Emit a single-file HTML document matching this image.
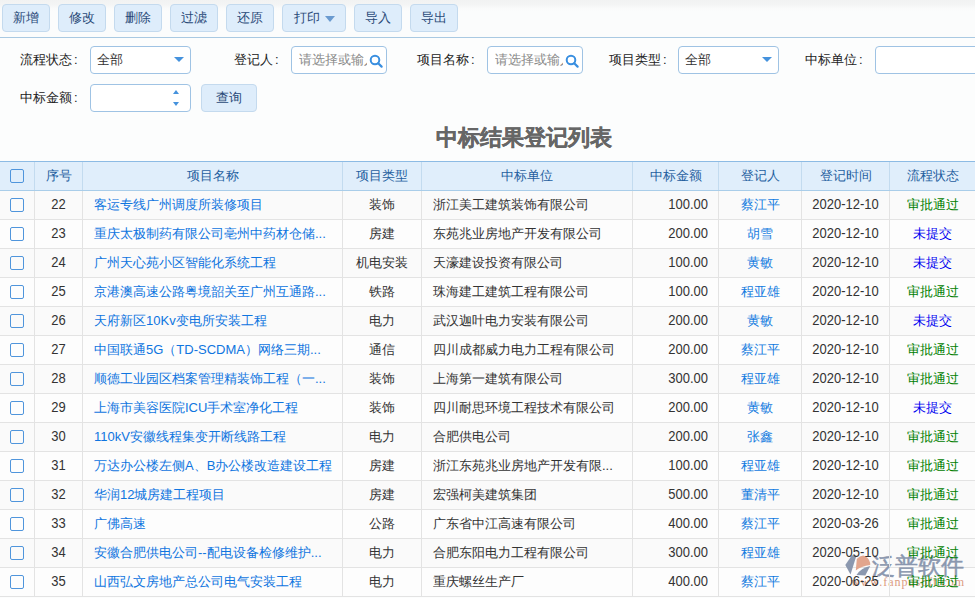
<!DOCTYPE html>
<html><head><meta charset="utf-8"><style>
*{box-sizing:border-box;margin:0;padding:0}
html,body{width:975px;height:598px;overflow:hidden}
body{background:#fcfdfd;font-family:"Liberation Sans",sans-serif;font-size:13px;color:#222;position:relative}
.toolbar{position:absolute;left:0;top:0;width:975px;height:38px;background:linear-gradient(#f1f2f2 0px,#f3f4f4 4px,#f9fafa 8px,#fbfcfc 12px,#fbfcfc 38px);border-bottom:1px solid #a9c9e2}
.btn{position:absolute;top:4px;height:28px;width:48px;border:1px solid #c4daee;border-radius:4px;background:#deedfb;color:#2a4a78;text-align:center;line-height:26px;font-size:13px}
.btn .arr{display:inline-block;width:0;height:0;border-left:5px solid transparent;border-right:5px solid transparent;border-top:6px solid #6a9bd0;margin-left:5px;vertical-align:0px}
.lbl{position:absolute;font-size:13px;color:#222;line-height:28px}
.inp{position:absolute;height:28px;border:1px solid #9fc3e4;border-radius:4px;background:#fff;line-height:26px;padding-left:6px;font-size:13px;color:#333;overflow:hidden;white-space:nowrap}
.inp .ph{color:#8a8a8a}
.sel-arr{position:absolute;right:6px;top:10px;width:0;height:0;border-left:5px solid transparent;border-right:5px solid transparent;border-top:5px solid #4592dd}
.title{position:absolute;left:0;width:1047px;top:123px;text-align:center;font-size:22px;font-weight:bold;color:#666;line-height:30px;-webkit-text-stroke:.3px #666}
.thead{position:absolute;left:0;top:161px;width:975px;height:30px;background:#e0eefb;border-top:1px solid #8dbbe4;border-bottom:1px solid #a9cde9}
.th{position:absolute;top:0;height:28px;line-height:28px;text-align:center;color:#1f5f9f;border-left:1px solid #c3dbef}
.th:first-child{border-left:none}
.tr{position:absolute;left:0;width:975px;height:29px;background:#fdfdfd;border-bottom:1px solid #e3e3e3}
.tr.alt{background:#fafafa}
.td{position:absolute;z-index:2;top:0;color:#333;height:28px;line-height:28px;border-left:1px solid #e3e3e3;white-space:nowrap;overflow:hidden}
.td:first-child{border-left:none}
.td.c{text-align:center}
.td.l{padding-left:11px}
.td.r{text-align:right;padding-right:10px}
.name{color:#0f75e0}
.who{color:#127ae0}
.ok{color:#008000}
.no{color:#0000f0}
.cb{display:inline-block;width:14px;height:14px;border:1px solid #4f95dc;border-radius:2px;background:transparent;vertical-align:middle}
.th .cb{position:absolute;left:10px;top:7px}.td .cb{position:absolute;left:10px;top:7px}

.colon{margin-left:2px}
.srch{position:absolute;left:77px;top:7px}
.inp .ph{position:absolute;left:7px;top:0;width:68px;overflow:hidden}
.spin-up{position:absolute;left:82px;top:5px;width:0;height:0;border-left:3.5px solid transparent;border-right:3.5px solid transparent;border-bottom:4px solid #4592dd}
.spin-dn{position:absolute;left:82px;top:17px;width:0;height:0;border-left:3.5px solid transparent;border-right:3.5px solid transparent;border-top:4px solid #4592dd}
.wm{position:absolute;left:840px;top:550px;width:135px;height:48px;pointer-events:none;z-index:1}
.wm-t{position:absolute;left:32px;top:1px;font-size:23px;line-height:30px;color:#8592ab;opacity:.95;-webkit-text-stroke:.5px #8592ab;white-space:nowrap}
.wm-u{position:absolute;left:11px;top:26px;font-family:"Liberation Serif",serif;font-size:12px;line-height:12px;color:#dc9a80;letter-spacing:1px;white-space:nowrap}
.num{display:inline-block;transform:scaleY(1.11);transform-origin:50% 66%}

</style></head><body>
<div class="toolbar">
<div class="btn" style="left:2px">新增</div>
<div class="btn" style="left:58px">修改</div>
<div class="btn" style="left:114px">删除</div>
<div class="btn" style="left:170px">过滤</div>
<div class="btn" style="left:226px">还原</div>
<div class="btn" style="left:282px;width:64px">打印<span class="arr"></span></div>
<div class="btn" style="left:354px">导入</div>
<div class="btn" style="left:410px">导出</div>
</div>
<div class="lbl" style="left:20px;top:46px">流程状态<span class="colon">:</span></div>
<div class="inp" style="left:90px;top:46px;width:101px">全部<span class="sel-arr"></span></div>
<div class="lbl" style="left:234px;top:46px">登记人<span class="colon">:</span></div>
<div class="inp" style="left:291px;top:46px;width:96px"><span class="ph">请选择或输入</span><svg class="srch" width="14" height="14" viewBox="0 0 14 14"><circle cx="6" cy="6" r="4.3" fill="none" stroke="#3a8fe0" stroke-width="2"/><line x1="9.2" y1="9.2" x2="12.6" y2="12.6" stroke="#3a8fe0" stroke-width="2.2" stroke-linecap="round"/></svg></div>
<div class="lbl" style="left:417px;top:46px">项目名称<span class="colon">:</span></div>
<div class="inp" style="left:487px;top:46px;width:96px"><span class="ph">请选择或输入</span><svg class="srch" width="14" height="14" viewBox="0 0 14 14"><circle cx="6" cy="6" r="4.3" fill="none" stroke="#3a8fe0" stroke-width="2"/><line x1="9.2" y1="9.2" x2="12.6" y2="12.6" stroke="#3a8fe0" stroke-width="2.2" stroke-linecap="round"/></svg></div>
<div class="lbl" style="left:609px;top:46px">项目类型<span class="colon">:</span></div>
<div class="inp" style="left:678px;top:46px;width:101px">全部<span class="sel-arr"></span></div>
<div class="lbl" style="left:805px;top:46px">中标单位<span class="colon">:</span></div>
<div class="inp" style="left:875px;top:46px;width:140px"></div>
<div class="lbl" style="left:20px;top:84px">中标金额<span class="colon">:</span></div>
<div class="inp" style="left:90px;top:84px;width:101px"><span class="spin-up"></span><span class="spin-dn"></span></div>
<div class="btn" style="left:201px;top:84px;width:56px">查询</div>

<div class="title">中标结果登记列表</div>
<div class="table">
<div class="thead"><div class="th" style="left:0px;width:34px"><span class="cb"></span></div><div class="th" style="left:34px;width:48px">序号</div><div class="th" style="left:82px;width:260px">项目名称</div><div class="th" style="left:342px;width:79px">项目类型</div><div class="th" style="left:421px;width:211px">中标单位</div><div class="th" style="left:632px;width:86px">中标金额</div><div class="th" style="left:718px;width:83px">登记人</div><div class="th" style="left:801px;width:88px">登记时间</div><div class="th" style="left:889px;width:86px">流程状态</div></div><div class="tr alt" style="top:191px"><div class="td c" style="left:0px;width:34px"><span class="cb"></span></div><div class="td c" style="left:34px;width:48px"><span class="num">22</span></div><div class="td l name" style="left:82px;width:260px">客运专线广州调度所装修项目</div><div class="td c" style="left:342px;width:79px">装饰</div><div class="td l" style="left:421px;width:211px">浙江美工建筑装饰有限公司</div><div class="td r" style="left:632px;width:86px"><span class="num">100.00</span></div><div class="td c who" style="left:718px;width:83px">蔡江平</div><div class="td c" style="left:801px;width:88px"><span class="num">2020-12-10</span></div><div class="td c ok" style="left:889px;width:86px">审批通过</div></div><div class="tr" style="top:220px"><div class="td c" style="left:0px;width:34px"><span class="cb"></span></div><div class="td c" style="left:34px;width:48px"><span class="num">23</span></div><div class="td l name" style="left:82px;width:260px">重庆太极制药有限公司亳州中药材仓储...</div><div class="td c" style="left:342px;width:79px">房建</div><div class="td l" style="left:421px;width:211px">东苑兆业房地产开发有限公司</div><div class="td r" style="left:632px;width:86px"><span class="num">200.00</span></div><div class="td c who" style="left:718px;width:83px">胡雪</div><div class="td c" style="left:801px;width:88px"><span class="num">2020-12-10</span></div><div class="td c no" style="left:889px;width:86px">未提交</div></div><div class="tr alt" style="top:249px"><div class="td c" style="left:0px;width:34px"><span class="cb"></span></div><div class="td c" style="left:34px;width:48px"><span class="num">24</span></div><div class="td l name" style="left:82px;width:260px">广州天心苑小区智能化系统工程</div><div class="td c" style="left:342px;width:79px">机电安装</div><div class="td l" style="left:421px;width:211px">天濠建设投资有限公司</div><div class="td r" style="left:632px;width:86px"><span class="num">100.00</span></div><div class="td c who" style="left:718px;width:83px">黄敏</div><div class="td c" style="left:801px;width:88px"><span class="num">2020-12-10</span></div><div class="td c no" style="left:889px;width:86px">未提交</div></div><div class="tr" style="top:278px"><div class="td c" style="left:0px;width:34px"><span class="cb"></span></div><div class="td c" style="left:34px;width:48px"><span class="num">25</span></div><div class="td l name" style="left:82px;width:260px">京港澳高速公路粤境韶关至广州互通路...</div><div class="td c" style="left:342px;width:79px">铁路</div><div class="td l" style="left:421px;width:211px">珠海建工建筑工程有限公司</div><div class="td r" style="left:632px;width:86px"><span class="num">100.00</span></div><div class="td c who" style="left:718px;width:83px">程亚雄</div><div class="td c" style="left:801px;width:88px"><span class="num">2020-12-10</span></div><div class="td c ok" style="left:889px;width:86px">审批通过</div></div><div class="tr alt" style="top:307px"><div class="td c" style="left:0px;width:34px"><span class="cb"></span></div><div class="td c" style="left:34px;width:48px"><span class="num">26</span></div><div class="td l name" style="left:82px;width:260px">天府新区10Kv变电所安装工程</div><div class="td c" style="left:342px;width:79px">电力</div><div class="td l" style="left:421px;width:211px">武汉迦叶电力安装有限公司</div><div class="td r" style="left:632px;width:86px"><span class="num">200.00</span></div><div class="td c who" style="left:718px;width:83px">黄敏</div><div class="td c" style="left:801px;width:88px"><span class="num">2020-12-10</span></div><div class="td c no" style="left:889px;width:86px">未提交</div></div><div class="tr" style="top:336px"><div class="td c" style="left:0px;width:34px"><span class="cb"></span></div><div class="td c" style="left:34px;width:48px"><span class="num">27</span></div><div class="td l name" style="left:82px;width:260px">中国联通5G（TD-SCDMA）网络三期...</div><div class="td c" style="left:342px;width:79px">通信</div><div class="td l" style="left:421px;width:211px">四川成都威力电力工程有限公司</div><div class="td r" style="left:632px;width:86px"><span class="num">200.00</span></div><div class="td c who" style="left:718px;width:83px">蔡江平</div><div class="td c" style="left:801px;width:88px"><span class="num">2020-12-10</span></div><div class="td c ok" style="left:889px;width:86px">审批通过</div></div><div class="tr alt" style="top:365px"><div class="td c" style="left:0px;width:34px"><span class="cb"></span></div><div class="td c" style="left:34px;width:48px"><span class="num">28</span></div><div class="td l name" style="left:82px;width:260px">顺德工业园区档案管理精装饰工程（一...</div><div class="td c" style="left:342px;width:79px">装饰</div><div class="td l" style="left:421px;width:211px">上海第一建筑有限公司</div><div class="td r" style="left:632px;width:86px"><span class="num">300.00</span></div><div class="td c who" style="left:718px;width:83px">程亚雄</div><div class="td c" style="left:801px;width:88px"><span class="num">2020-12-10</span></div><div class="td c ok" style="left:889px;width:86px">审批通过</div></div><div class="tr" style="top:394px"><div class="td c" style="left:0px;width:34px"><span class="cb"></span></div><div class="td c" style="left:34px;width:48px"><span class="num">29</span></div><div class="td l name" style="left:82px;width:260px">上海市美容医院ICU手术室净化工程</div><div class="td c" style="left:342px;width:79px">装饰</div><div class="td l" style="left:421px;width:211px">四川耐思环境工程技术有限公司</div><div class="td r" style="left:632px;width:86px"><span class="num">200.00</span></div><div class="td c who" style="left:718px;width:83px">黄敏</div><div class="td c" style="left:801px;width:88px"><span class="num">2020-12-10</span></div><div class="td c no" style="left:889px;width:86px">未提交</div></div><div class="tr alt" style="top:423px"><div class="td c" style="left:0px;width:34px"><span class="cb"></span></div><div class="td c" style="left:34px;width:48px"><span class="num">30</span></div><div class="td l name" style="left:82px;width:260px">110kV安徽线程集变开断线路工程</div><div class="td c" style="left:342px;width:79px">电力</div><div class="td l" style="left:421px;width:211px">合肥供电公司</div><div class="td r" style="left:632px;width:86px"><span class="num">200.00</span></div><div class="td c who" style="left:718px;width:83px">张鑫</div><div class="td c" style="left:801px;width:88px"><span class="num">2020-12-10</span></div><div class="td c ok" style="left:889px;width:86px">审批通过</div></div><div class="tr" style="top:452px"><div class="td c" style="left:0px;width:34px"><span class="cb"></span></div><div class="td c" style="left:34px;width:48px"><span class="num">31</span></div><div class="td l name" style="left:82px;width:260px">万达办公楼左侧A、B办公楼改造建设工程</div><div class="td c" style="left:342px;width:79px">房建</div><div class="td l" style="left:421px;width:211px">浙江东苑兆业房地产开发有限...</div><div class="td r" style="left:632px;width:86px"><span class="num">100.00</span></div><div class="td c who" style="left:718px;width:83px">程亚雄</div><div class="td c" style="left:801px;width:88px"><span class="num">2020-12-10</span></div><div class="td c ok" style="left:889px;width:86px">审批通过</div></div><div class="tr alt" style="top:481px"><div class="td c" style="left:0px;width:34px"><span class="cb"></span></div><div class="td c" style="left:34px;width:48px"><span class="num">32</span></div><div class="td l name" style="left:82px;width:260px">华润12城房建工程项目</div><div class="td c" style="left:342px;width:79px">房建</div><div class="td l" style="left:421px;width:211px">宏强柯美建筑集团</div><div class="td r" style="left:632px;width:86px"><span class="num">500.00</span></div><div class="td c who" style="left:718px;width:83px">董清平</div><div class="td c" style="left:801px;width:88px"><span class="num">2020-12-10</span></div><div class="td c ok" style="left:889px;width:86px">审批通过</div></div><div class="tr" style="top:510px"><div class="td c" style="left:0px;width:34px"><span class="cb"></span></div><div class="td c" style="left:34px;width:48px"><span class="num">33</span></div><div class="td l name" style="left:82px;width:260px">广佛高速</div><div class="td c" style="left:342px;width:79px">公路</div><div class="td l" style="left:421px;width:211px">广东省中江高速有限公司</div><div class="td r" style="left:632px;width:86px"><span class="num">400.00</span></div><div class="td c who" style="left:718px;width:83px">蔡江平</div><div class="td c" style="left:801px;width:88px"><span class="num">2020-03-26</span></div><div class="td c ok" style="left:889px;width:86px">审批通过</div></div><div class="tr alt" style="top:539px"><div class="td c" style="left:0px;width:34px"><span class="cb"></span></div><div class="td c" style="left:34px;width:48px"><span class="num">34</span></div><div class="td l name" style="left:82px;width:260px">安徽合肥供电公司--配电设备检修维护...</div><div class="td c" style="left:342px;width:79px">电力</div><div class="td l" style="left:421px;width:211px">合肥东阳电力工程有限公司</div><div class="td r" style="left:632px;width:86px"><span class="num">300.00</span></div><div class="td c who" style="left:718px;width:83px">程亚雄</div><div class="td c" style="left:801px;width:88px"><span class="num">2020-05-10</span></div><div class="td c ok" style="left:889px;width:86px">审批通过</div></div><div class="tr" style="top:568px"><div class="td c" style="left:0px;width:34px"><span class="cb"></span></div><div class="td c" style="left:34px;width:48px"><span class="num">35</span></div><div class="td l name" style="left:82px;width:260px">山西弘文房地产总公司电气安装工程</div><div class="td c" style="left:342px;width:79px">电力</div><div class="td l" style="left:421px;width:211px">重庆螺丝生产厂</div><div class="td r" style="left:632px;width:86px"><span class="num">400.00</span></div><div class="td c who" style="left:718px;width:83px">蔡江平</div><div class="td c" style="left:801px;width:88px"><span class="num">2020-06-25</span></div><div class="td c ok" style="left:889px;width:86px">审批通过</div></div>
</div>
<div class="wm">
<svg style="position:absolute;left:0;top:0" width="40" height="42" viewBox="0 0 40 42">
<path d="M5.3 15.1 L11.9 5.3 L16.5 5.4 L10.5 24.6 Z" fill="#8592ab" fill-opacity=".95"/>
<path d="M16.8 9.1 Q19.5 6 23.2 5.6 Q28.6 7 30.2 13 L30.2 15.1 Q21 16.3 15.8 20.4 Z" fill="#e2a58d"/>
<path d="M16.5 24.9 Q21.5 17.8 30.2 16.1 L25.3 25.6 Z" fill="#8592ab" fill-opacity=".95"/>
</svg>
<div class="wm-t">泛普软件</div>
<div class="wm-u">www.fanpusoft.com</div>
</div>

</body></html>
